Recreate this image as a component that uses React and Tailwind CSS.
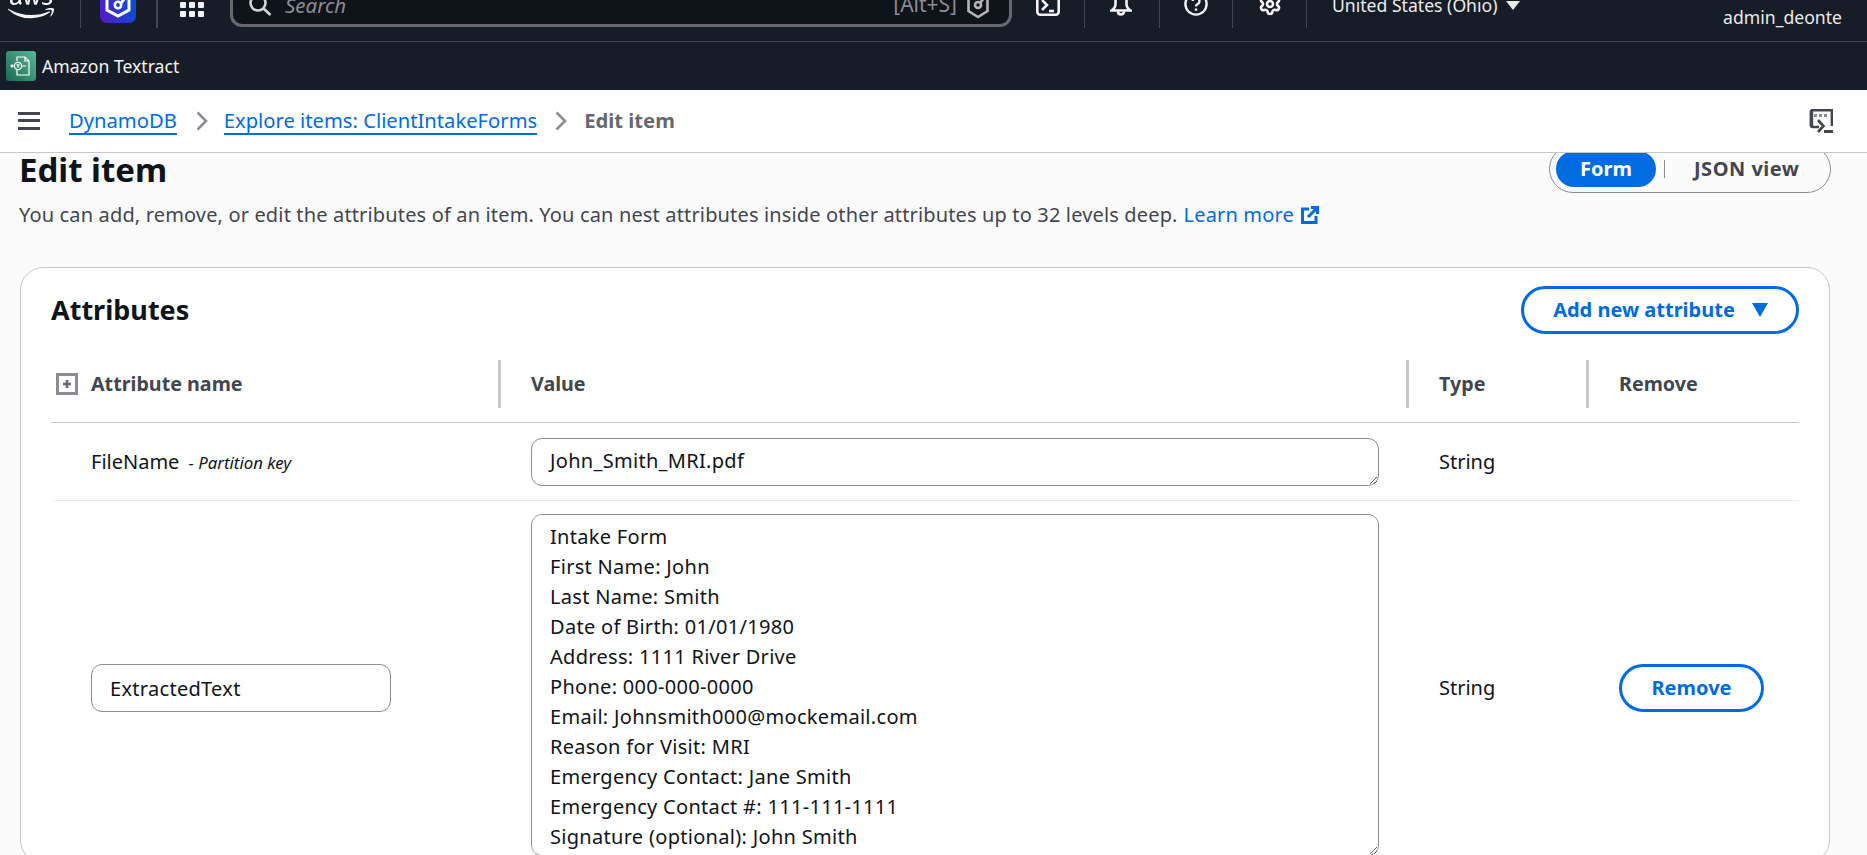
import { Settings } from "lucide-react";
import { FaAws } from "react-icons/fa";

const intakeText = `Intake Form
First Name: John
Last Name: Smith
Date of Birth: 01/01/1980
Address: 1111 River Drive
Phone: 000-000-0000
Email: Johnsmith000@mockemail.com
Reason for Visit: MRI
Emergency Contact: Jane Smith
Emergency Contact #: 111-111-1111
Signature (optional): John Smith`;

function TopDivider({ className }) {
  return <div className={`h-[28px] w-px self-start bg-[#424650] ${className}`} />;
}

function Chevron() {
  return (
    <svg width="12" height="20" viewBox="0 0 12 20" fill="none" stroke="#8c8c94" strokeWidth="2.6" className="shrink-0">
      <path d="M1.500 1.500 10 10l-8.500 8.500" />
    </svg>
  );
}

function TopBar() {
  return (
    <div className="flex h-[41px] items-end overflow-hidden bg-[#161d26] text-[#e9ebed]">
      <FaAws className="mb-[18px] ml-[8px] h-[37px] w-[46px] shrink-0 text-[#f3f3f7]" />
      <TopDivider className="ml-[26px]" />
      <svg width="36" height="36" viewBox="0 0 36 36" className="mb-[18px] ml-[19px] shrink-0">
        <defs>
          <linearGradient id="tile" x1="0" y1="1" x2="1" y2="0.6">
            <stop offset="0" stopColor="#5b16c4" />
            <stop offset="1" stopColor="#0650d8" />
          </linearGradient>
        </defs>
        <rect width="36" height="36" rx="7" fill="url(#tile)" />
        <path d="M7 12v11l11 6 11-6V12" fill="none" stroke="#fff" strokeWidth="3" />
        <circle cx="18" cy="18" r="3.200" fill="none" stroke="#fff" strokeWidth="2.600" />
        <path d="M21 16l5-6" stroke="#fff" strokeWidth="2.800" />
      </svg>
      <div className="ml-[20px] h-[28px] w-[2px] self-start bg-[#424650]" />
      <div className="mb-[24px] ml-[22px] grid shrink-0 grid-cols-3 gap-[3px]">
        {[0, 1, 2, 3, 4, 5, 6, 7, 8].map((i) => (
          <span key={i} className="h-[6px] w-[6px] rounded-[1px] bg-[#f3f3f7]" />
        ))}
      </div>
      <div className="mb-[14px] ml-[26px] flex h-[60px] w-[782px] shrink-0 items-center rounded-[12px] border-[3px] border-[#656871] bg-[#0f141a] pt-[16px] pr-[20px] pl-[15px]">
        <svg width="24" height="24" viewBox="0 0 24 24" fill="none" stroke="#d1d5db" strokeWidth="2.6" className="shrink-0">
          <circle cx="10" cy="10" r="7.500" />
          <path d="m15.500 15.500 7 6.500" />
        </svg>
        <span className="ml-[13px] text-[20.5px] italic text-[#8c8c94]">Search</span>
        <span className="ml-auto text-[21px] text-[#8c8c94]">[Alt+S]</span>
        <svg width="22" height="28" viewBox="0 0 22 28" fill="none" stroke="#b4b4bb" strokeWidth="2.6" className="ml-[10px] shrink-0">
          <path d="M1.500 8v12L11 26l9.500-6V8" />
          <circle cx="11" cy="14" r="3" />
          <path d="m13 12 4-5" />
        </svg>
      </div>
      <svg width="24" height="32" viewBox="0 0 24 32" fill="none" stroke="#f3f3f7" strokeWidth="2.6" className="mb-[25px] ml-[24px] shrink-0">
        <rect x="1.300" y="1.300" width="21.400" height="29.400" rx="3" />
        <path d="m6 16 5 5-5 5" />
        <path d="M13 27h5" />
      </svg>
      <TopDivider className="ml-[24px]" />
      <svg width="22" height="24" viewBox="0 0 22 24" fill="none" stroke="#f3f3f7" strokeWidth="2.6" className="mb-[25px] ml-[25px] shrink-0">
        <path d="M5.500 2v10c0 3-1.500 5-4 6.500h19c-2.500-1.500-4-3.500-4-6.500V2" />
        <path d="M8 19.500c0 2 1.500 3 3 3s3-1 3-3" />
      </svg>
      <TopDivider className="ml-[27px]" />
      <svg width="24" height="24" viewBox="0 0 24 24" fill="none" stroke="#f3f3f7" strokeWidth="2.4" className="mb-[25px] ml-[24px] shrink-0">
        <circle cx="12" cy="12" r="10.600" />
        <path d="M8.800 9a3.300 3.300 0 1 1 4.800 3c-1 .6-1.600 1.200-1.600 2.400" />
        <path d="M12 16.500v2.200" />
      </svg>
      <TopDivider className="ml-[24px]" />
      <Settings className="mb-[25px] ml-[25px] h-[24px] w-[24px] shrink-0 text-[#f3f3f7]" strokeWidth={2.6} />
      <TopDivider className="ml-[24px]" />
      <div className="mb-[24px] ml-[25px] flex shrink-0 items-center">
        <span className="text-[17.6px] leading-[24px]">United States (Ohio)</span>
        <svg width="14" height="9" viewBox="0 0 14 9" fill="#e9ebed" className="ml-[9px]">
          <path d="M0 0h14L7 9z" />
        </svg>
      </div>
      <span className="mr-[25px] mb-[12px] ml-auto text-[17.6px] leading-[24px]">admin_deonte</span>
    </div>
  );
}

function ServiceBar() {
  return (
    <div className="flex h-[49px] items-center border-t border-[#424650] bg-[#161d26] pl-[6px] text-[#f3f3f7]">
      <div className="flex h-[30px] w-[30px] items-center justify-center rounded-[3px] bg-linear-to-tr from-[#146c52] to-[#5bb698]">
        <svg width="24" height="24" viewBox="0 0 24 24" fill="none" stroke="#fff" strokeWidth="1.200">
          <path d="M8 7V3h8l4 4v14H8v-5" />
          <path d="M16 3v4h4" />
          <circle cx="9" cy="12" r="3.600" />
          <path d="M7.500 10.800h3M9 10.800v3" />
          <path d="M12.600 12H17M5.400 12H2m1.500-1.500L2 12l1.500 1.500" />
        </svg>
      </div>
      <span className="ml-[6px] text-[17.6px]">Amazon Textract</span>
    </div>
  );
}

function Breadcrumbs() {
  return (
    <div className="flex h-[63px] items-center border-b border-[#c6c6cd] bg-white pr-[34px] pb-[1px] pl-[18px] text-[20.2px]">
      <div className="flex h-[18px] w-[22px] flex-col justify-between">
        <span className="h-[3px] bg-[#424650]" />
        <span className="h-[3px] bg-[#424650]" />
        <span className="h-[3px] bg-[#424650]" />
      </div>
      <a className="ml-[29px] border-b-2 border-[#006ce0] leading-[26px] text-[#006ce0]">DynamoDB</a>
      <span className="ml-[19px]"><Chevron /></span>
      <a className="ml-[16px] border-b-2 border-[#006ce0] leading-[26px] text-[#006ce0]">Explore items: ClientIntakeForms</a>
      <span className="ml-[18px]"><Chevron /></span>
      <span className="ml-[17px] font-bold text-[#656871]">Edit item</span>
      <svg width="24" height="24" viewBox="0 0 24 24" fill="none" className="ml-auto shrink-0">
        <path d="M3 17V1.200h19.800V17" stroke="#424650" strokeWidth="2.400" />
        <path d="M1.800 1.200V16a2 2 0 0 0 2 2H10" stroke="#424650" strokeWidth="2.400" />
        <path d="M5 5h3v3H5zM10 5h3v3h-3zM15 5h3v3h-3z" fill="#8c8c94" />
        <path d="m9 11 5.500 6L9 23" stroke="#424650" strokeWidth="2.600" />
        <path d="M15 22.500h9" stroke="#424650" strokeWidth="3" />
      </svg>
    </div>
  );
}

function HeaderCell({ children, first }) {
  return (
    <div className={`flex h-[48px] items-center text-[19.7px] font-bold text-[#424650] ${first ? "" : "border-l-[3px] border-[#c6c6cd] pl-[30px]"}`}>
      {children}
    </div>
  );
}

function Attributes() {
  return (
    <div className="mt-[37px] rounded-[23px] border border-[#c6c6cd] bg-white px-[30px] pt-[18px]">
      <div className="flex items-center justify-between">
        <h2 className="text-[27px] font-bold text-[#0f141a]">Attributes</h2>
        <button className="flex h-[48px] w-[278px] items-center justify-center gap-[17px] rounded-full border-[3px] border-[#006ce0] pl-[1px] text-[20px] font-bold text-[#006ce0]">
          Add new attribute
          <svg width="16" height="14" viewBox="0 0 16 14" fill="#006ce0"><path d="M0 0h16L8 14z" /></svg>
        </button>
      </div>

      <div className="mt-[26px] grid grid-cols-[447px_908px_180px_213px] border-b border-[#c6c6cd] pb-[14px]">
        <HeaderCell first>
          <svg width="22" height="22" viewBox="0 0 22 22" fill="none" className="mr-[13px] ml-[5px]">
            <rect x="1.500" y="1.500" width="19" height="19" stroke="#8c8c94" strokeWidth="3" />
            <path d="M11 7v8M7 11h8" stroke="#656871" strokeWidth="2.600" />
          </svg>
          Attribute name
        </HeaderCell>
        <HeaderCell>Value</HeaderCell>
        <HeaderCell>Type</HeaderCell>
        <HeaderCell>Remove</HeaderCell>
      </div>

      <div className="grid grid-cols-[447px_908px_180px_213px] items-center border-b border-[#e9ebed] pt-[15px] pb-[14px] text-[20px] text-[#0f141a]">
        <div className="pl-[40px]">
          FileName <span className="ml-[4px] text-[16.8px] italic">- Partition key</span>
        </div>
        <div className="pl-[33px]">
          <textarea readOnly value="John_Smith_MRI.pdf" className="block h-[48px] w-[848px] rounded-[11px] border border-[#8c8c94] bg-white px-[18px] py-[7px] leading-[30px] tracking-[0.3px] outline-none" />
        </div>
        <div className="pl-[33px]">String</div>
        <div />
      </div>

      <div className="grid grid-cols-[447px_908px_180px_213px] items-center pt-[13px] text-[20px] text-[#0f141a]">
        <div className="pl-[40px]">
          <input readOnly value="ExtractedText" className="h-[48px] w-[300px] rounded-[11px] border border-[#8c8c94] bg-white px-[18px] tracking-[0.3px] outline-none" />
        </div>
        <div className="pb-[6px] pl-[33px]">
          <textarea readOnly value={intakeText} className="block h-[342px] w-[848px] rounded-[11px] border border-[#8c8c94] bg-white px-[18px] py-[7px] leading-[30px] tracking-[0.3px] outline-none" />
        </div>
        <div className="pl-[33px]">String</div>
        <div className="pl-[33px]">
          <button className="h-[48px] w-[145px] rounded-full border-[3px] border-[#006ce0] text-[20px] font-bold text-[#006ce0]">Remove</button>
        </div>
      </div>
    </div>
  );
}

export default function App() {
  return (
    <div className="flex h-screen flex-col overflow-hidden bg-[#fbfbfb] font-['Noto_Sans',sans-serif]">
      <TopBar />
      <ServiceBar />
      <Breadcrumbs />
      <main className="flex-1 overflow-hidden pr-[37px] pl-[20px]">
        <div className="flex h-[40px] items-start justify-between">
          <h1 className="-ml-[1px] h-[34px] text-[33px] leading-[34px] font-bold text-[#0f141a]">Edit item</h1>
          <div className="-mt-[8px] mr-[-1px] flex h-[48px] w-[282px] items-center rounded-full border border-[#8c8c94] pl-[6px]">
            <span className="flex h-[36px] w-[100px] items-center justify-center rounded-full bg-[#006ce0] text-[20px] font-bold text-white">Form</span>
            <span className="ml-[8px] h-[18px] w-px bg-[#8c8c94]" />
            <span className="ml-[29px] text-[20px] font-bold tracking-[0.5px] text-[#424650]">JSON view</span>
          </div>
        </div>
        <p className="mt-[7px] -ml-[1px] flex items-center text-[20px] leading-[30px] tracking-[0.15px] text-[#424650]">
          You can add, remove, or edit the attributes of an item. You can nest attributes inside other attributes up to 32 levels deep.
          <a className="ml-[6px] text-[#006ce0]">Learn more</a>
          <svg width="18" height="18" viewBox="0 0 18 18" fill="none" stroke="#006ce0" strokeWidth="3" className="ml-[7px]">
            <path d="M8 3H1.500v13.500H15V10" />
            <path d="M7 11 16 2M10 1.500h6.500V8" />
          </svg>
        </p>
        <Attributes />
      </main>
    </div>
  );
}
